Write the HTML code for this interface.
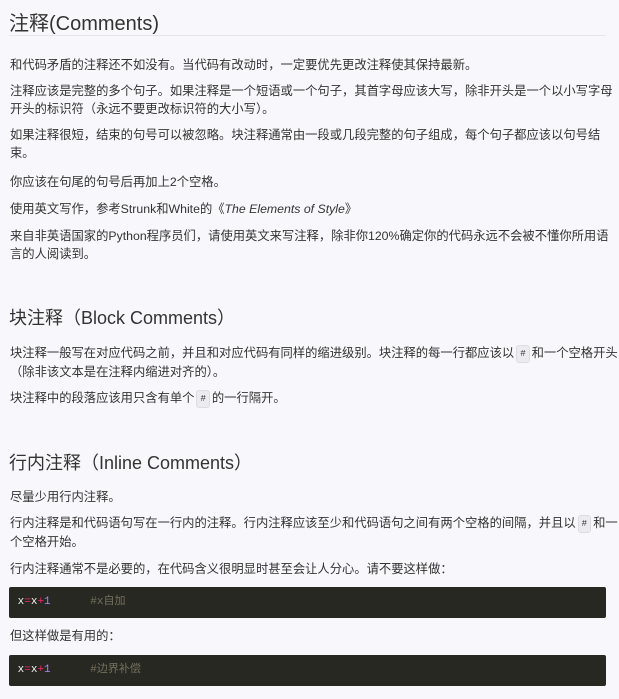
<!DOCTYPE html>
<html><head><meta charset="utf-8"><style>
html,body{margin:0;padding:0;background:#f8f8fc;width:619px;height:699px;overflow:hidden}
body{font-family:"Liberation Sans","Noto Sans CJK SC",sans-serif;color:#333;position:relative}
.p{position:absolute;left:10px;font-size:12.3px;line-height:18px;white-space:nowrap}
.h{position:absolute;left:9px;font-size:20px;color:#333;white-space:nowrap}
.h2{font-size:18px}
.hr{position:absolute;left:9px;width:597px;top:35px;height:1px;background:#e6e6ec}
code{display:inline-block;font-family:"Liberation Mono",monospace;font-size:9px;background:#ececf0;border:1px solid #dcdce2;border-radius:3px;padding:0 3px;margin:0 2px;line-height:16px;vertical-align:1px}
.code{position:absolute;left:9px;width:597px;height:31px;background:#272822;border-radius:2px;font-family:"Liberation Mono","Noto Sans CJK SC",monospace;font-size:11px;line-height:31px;white-space:pre;padding-left:2px;box-sizing:border-box}
</style></head><body>
<div class="h" style="top:7px">注释(Comments)</div>
<div class="hr"></div>
<div class="p" style="top:56px">和代码矛盾的注释还不如没有。当代码有改动时，一定要优先更改注释使其保持最新。</div>
<div class="p" style="top:82px">注释应该是完整的多个句子。如果注释是一个短语或一个句子，其首字母应该大写，除非开头是一个以小写字母<br>开头的标识符（永远不要更改标识符的大小写）。</div>
<div class="p" style="top:126px">如果注释很短，结束的句号可以被忽略。块注释通常由一段或几段完整的句子组成，每个句子都应该以句号结<br>束。</div>
<div class="p" style="top:173px">你应该在句尾的句号后再加上2个空格。</div>
<div class="p" style="top:200px">使用英文写作，参考Strunk和White的《<i>The Elements of Style</i>》</div>
<div class="p" style="top:227px">来自非英语国家的Python程序员们，请使用英文来写注释，除非你120%确定你的代码永远不会被不懂你所用语<br>言的人阅读到。</div>
<div class="h h2" style="top:304px">块注释（Block Comments）</div>
<div class="p" style="top:344px">块注释一般写在对应代码之前，并且和对应代码有同样的缩进级别。块注释的每一行都应该以<code>#</code>和一个空格开头<br>（除非该文本是在注释内缩进对齐的）。</div>
<div class="p" style="top:389px">块注释中的段落应该用只含有单个<code>#</code>的一行隔开。</div>
<div class="h h2" style="top:449px">行内注释（Inline Comments）</div>
<div class="p" style="top:488px">尽量少用行内注释。</div>
<div class="p" style="top:514px">行内注释是和代码语句写在一行内的注释。行内注释应该至少和代码语句之间有两个空格的间隔，并且以<code>#</code>和一<br>个空格开始。</div>
<div class="p" style="top:560px">行内注释通常不是必要的，在代码含义很明显时甚至会让人分心。请不要这样做：</div>
<div class="code" style="top:587px"> <span style="color:#f8f8f2">x</span><span style="color:#f92672">=</span><span style="color:#f8f8f2">x</span><span style="color:#f92672">+</span><span style="color:#ae81ff">1</span>      <span style="color:#75715e">#x自加</span></div>
<div class="p" style="top:627px">但这样做是有用的：</div>
<div class="code" style="top:655px"> <span style="color:#f8f8f2">x</span><span style="color:#f92672">=</span><span style="color:#f8f8f2">x</span><span style="color:#f92672">+</span><span style="color:#ae81ff">1</span>      <span style="color:#75715e">#边界补偿</span></div>
</body></html>
